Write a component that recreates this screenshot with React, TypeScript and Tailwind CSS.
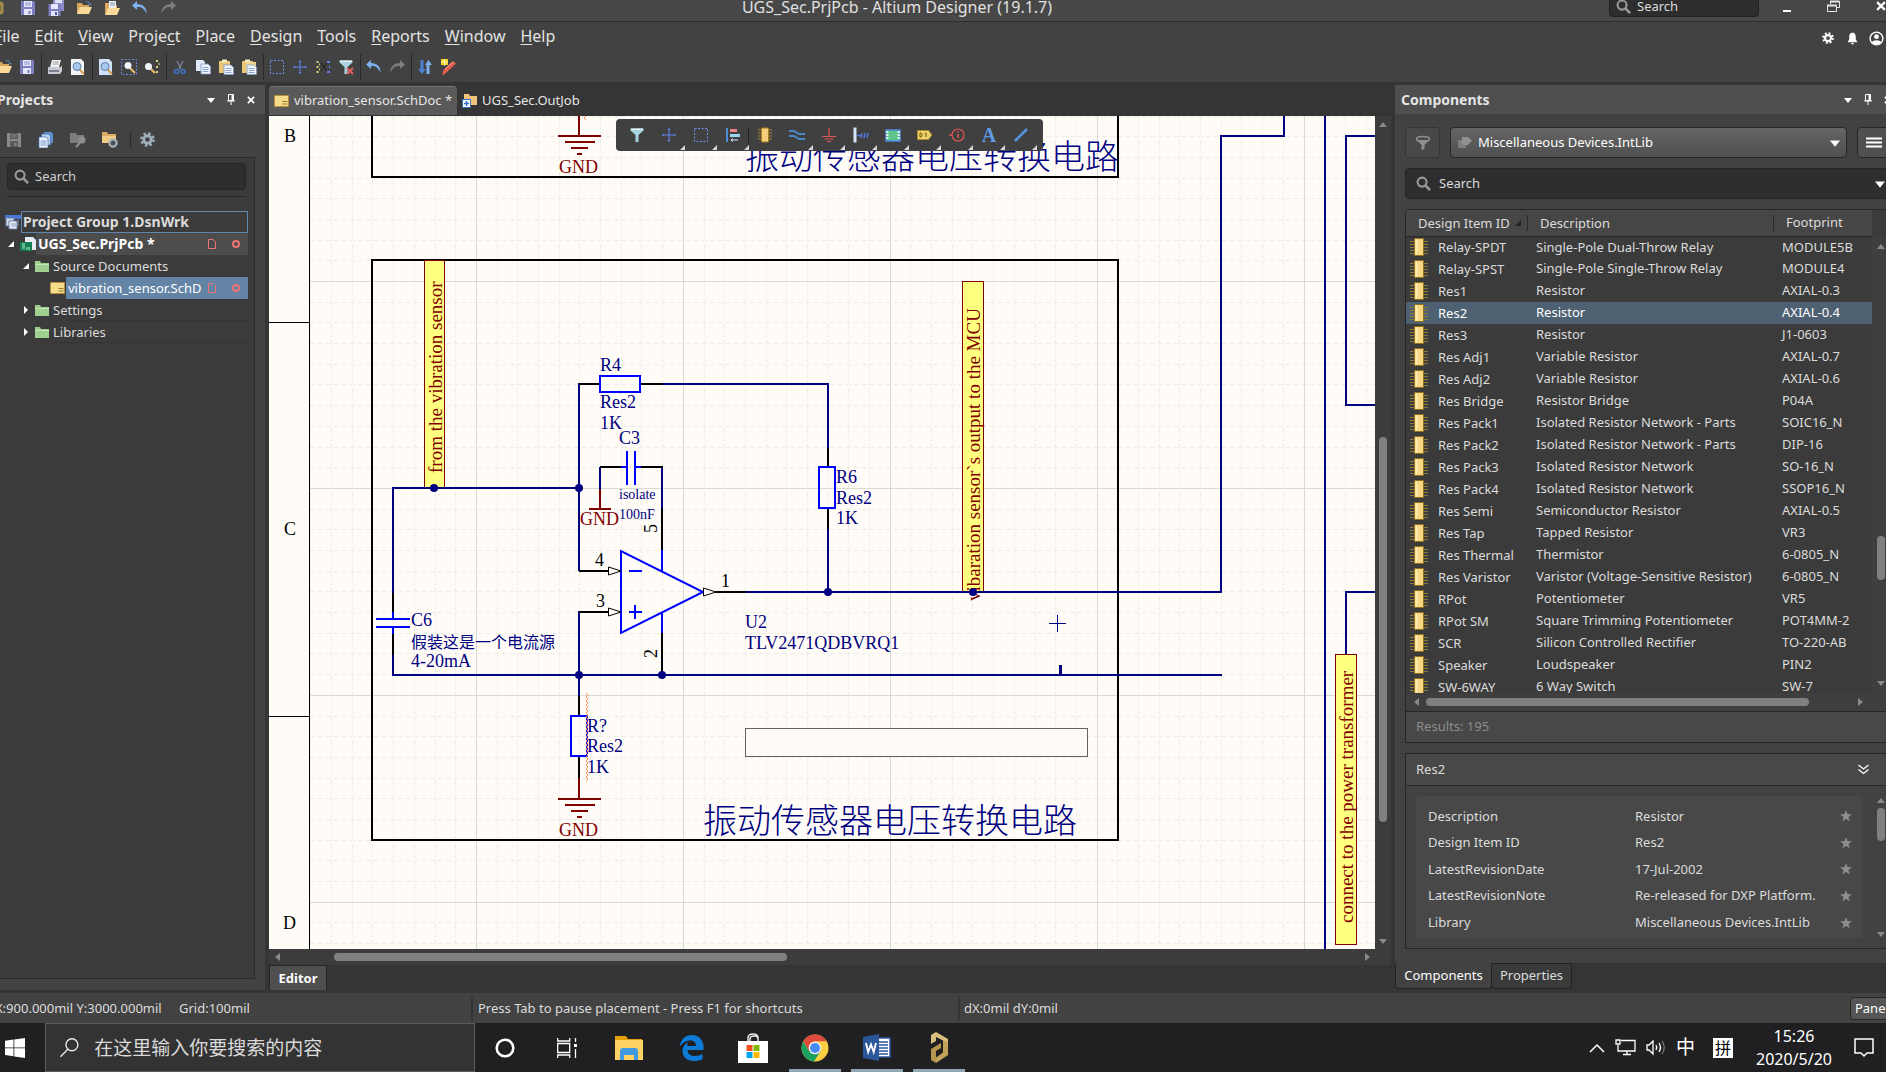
import React, { useState } from "react";

type Kids = { children?: React.ReactNode };

/* ---------- icons ---------- */

function Ic({ s = 16, children }: Kids & { s?: number }) {
  return (
    <svg width={s} height={s} viewBox="0 0 16 16" fill="none" aria-hidden="true" className="shrink-0">
      {children}
    </svg>
  );
}

const Save = ({ c = "#7d7fc0", l = "#e4e6fb" }: { c?: string; l?: string }) => (
  <Ic>
    <path d="M1 1h13l1 1v13H1z" fill={c} />
    <path d="M4 1h8v6H4z" fill={l} />
    <path d="M5 3h6M5 5h6" stroke={c} strokeWidth="0.8" />
    <path d="M4 9h8v6H4z" fill={l} />
    <path d="M8.500 11h2v3h-2z" fill={c} />
  </Ic>
);
const SaveAll = () => (
  <Ic>
    <path d="M5 0h11v11H5z" fill="#8b8cc8" />
    <path d="M7 0h7v3H7z" fill="#dfe2fa" />
    <path d="M0.500 4h12v12h-12z" fill="#7d7fc0" />
    <path d="M3 4h7v5H3zM3 11h7v5H3z" fill="#e4e6fb" />
    <path d="M7 12h2v3H7z" fill="#55579c" />
  </Ic>
);
const Open = () => (
  <Ic>
    <path d="M1 14V3h5l1 2h6v3" fill="#d9a75c" />
    <path d="M1 14 4 7h12l-3 7z" fill="#fbd998" />
    <path d="M10 2c2-1 4 0 4 3M12.500 4l1.500 1.500L15.500 4" stroke="#5b8fc9" strokeWidth="1" />
  </Ic>
);
const OpenDoc = () => (
  <Ic>
    <path d="M1 14V3h5l1 2h6v3" fill="#d9a75c" />
    <path d="M5 1h7v9H5z" fill="#eef3fa" />
    <path d="M6 3h5M6 5h5" stroke="#7d92ad" />
    <path d="M1 15 4 8h12l-3 7z" fill="#fbd998" />
  </Ic>
);
const Undo = () => (
  <Ic>
    <path d="M5 1 0 5.500 5 10V7c4-0.500 7 1 9.500 6.500C15 8 11 4 5 4z" fill="#7db0ee" />
  </Ic>
);
const Redo = () => (
  <Ic>
    <path d="M11 1l5 4.500L11 10V7c-4-0.500-7 1-9.500 6.500C1 8 5 4 11 4z" fill="#7e7e7e" />
  </Ic>
);
const Print = () => (
  <Ic>
    <path d="M5 1h9l-2 7H3z" fill="#f1f1f4" />
    <path d="M6 3h6M5.500 5h6" stroke="#8a8a92" strokeWidth="0.8" />
    <path d="M1 8h13l1-2v6l-2 3H1z" fill="#c6c8d2" />
    <path d="M2 11h10v2H2z" fill="#7c7e8a" />
  </Ic>
);
const Preview = ({ blue = false }: { blue?: boolean }) => (
  <Ic>
    <path d="M1 0h10l3 3v13H1z" fill={blue ? "#cfe0f8" : "#f2f4f8"} />
    <path d="M9.500 10.500 14 15" stroke="#d99a4e" strokeWidth="2" />
    <circle cx="7" cy="7.500" r="4" fill="#a8c9ee" stroke="#5d7da6" />
  </Ic>
);
const ZoomArea = () => (
  <Ic>
    <path d="M0.500 0.500h15v15h-15z" stroke="#6a86e0" strokeDasharray="2 1.500" />
    <path d="M9 9l5 5" stroke="#e7b765" strokeWidth="2.200" />
    <circle cx="7" cy="6.500" r="3.500" fill="#eef4fb" />
  </Ic>
);
const ZoomObj = () => (
  <Ic>
    <path d="M6 9l5 5" stroke="#e7b765" strokeWidth="2.200" />
    <circle cx="4.500" cy="7.500" r="3.500" fill="#eef4fb" />
    <path d="M12 2h2M12 8h2M12 13h2M14.500 5h1" stroke="#d8d67a" strokeWidth="2" />
  </Ic>
);
const Cut = () => (
  <Ic>
    <path d="M5 2l4 8M11 2 7 10" stroke="#7d8998" strokeWidth="1.200" />
    <circle cx="4.500" cy="12.500" r="2" stroke="#3f73c8" strokeWidth="1.500" />
    <circle cx="11" cy="12.500" r="2" stroke="#3f73c8" strokeWidth="1.500" />
  </Ic>
);
const Copy = () => (
  <Ic>
    <path d="M1 1h7l2 2v9H1z" fill="#dfe9f7" />
    <path d="M6 5h7l2.500 2.500V15H6z" fill="#f2f6fc" stroke="#7f9ac2" strokeWidth="0.800" />
    <path d="M7.500 8.500h6M7.500 10.500h6M7.500 12.500h6" stroke="#6d8fc4" strokeWidth="0.800" />
  </Ic>
);
const Paste = ({ multi = false }: { multi?: boolean }) => (
  <Ic>
    <path d="M1 2h11v12H1z" fill="#e8c777" />
    <path d="M4 0.500h5v3H4z" fill="#f6eec3" />
    {multi && <path d="M5 3h10v10H5z" fill="#f0d78f" />}
    <path d="M6 6h7l2.500 2.500V15.500H6z" fill="#f2f6fc" stroke="#7f9ac2" strokeWidth="0.800" />
    <path d="M7.500 9.500h6M7.500 11.500h6M7.500 13.500h6" stroke="#6d8fc4" strokeWidth="0.800" />
  </Ic>
);
const Marquee = () => (
  <Ic>
    <path d="M1.500 1.500h13v13h-13z" stroke="#7291f0" strokeDasharray="2 1.500" />
  </Ic>
);
const Cross = () => (
  <Ic>
    <path d="M8 1.500v13M1.500 8h13" stroke="#6482e6" strokeWidth="1.100" />
    <path d="M8 1l1.500 2h-3zM8 15l1.500-2h-3zM1 8l2-1.500v3zM15 8l-2-1.500v3z" fill="#6482e6" />
  </Ic>
);
const Scatter = () => (
  <Ic>
    <path d="M1.500 3h2M1.500 8h2M1.500 13h2M4 5.500h1M4 10.500h1" stroke="#d8d67a" strokeWidth="2" />
    <path d="M6 4l6 8M12 4l-6 8" stroke="#222" />
    <path d="M12 3h3M12 13h3M14 8h1" stroke="#6482e6" strokeWidth="2" />
  </Ic>
);
const Funnel = ({ x = false }: { x?: boolean }) => (
  <Ic>
    <path d="M1.500 1.500h13v2L9.500 8v7h-3V8L1.500 3.500z" fill="#a9d3e2" />
    <path d="M2 1.500h12v1.500H2z" fill="#e3f2f7" />
    {x && <path d="M9 9l6 6M15 9l-6 6" stroke="#e26060" strokeWidth="2" />}
  </Ic>
);
const UpDown = () => (
  <Ic>
    <path d="M3.500 1h3v9H9l-4 5-4-5h2.500z" fill="#4a7fd4" />
    <path d="M9.500 15h3V6H15l-3.500-5L8 6h1.500z" fill="#7fb0ee" />
  </Ic>
);
const Pen = () => (
  <Ic>
    <path d="M13 2l3 2.500L7 13l-5 4 1.500-6z" fill="#e5604c" />
    <path d="M5 10l8-7" stroke="#f6a08e" />
    <path d="M1 0h7v6H1z" fill="#f5d327" />
    <path d="M4.500 0v7M1 3h7" stroke="#fff9c0" />
  </Ic>
);
const Gear = ({ c = "#9fb0bd", s = 16 }: { c?: string; s?: number }) => (
  <Ic s={s}>
    <circle cx="8" cy="8" r="6.500" stroke={c} strokeWidth="2.600" strokeDasharray="2.600 2.500" />
    <circle cx="8" cy="8" r="4" stroke={c} strokeWidth="3" />
  </Ic>
);
const Docs = () => (
  <Ic>
    <path d="M6 0h7l2 2v9H6z" fill="#5f93d0" />
    <path d="M3.500 2h7l2 2v9h-9z" fill="#b8d4f2" stroke="#3f6ea8" strokeWidth="0.700" />
    <path d="M1 5h7l2 2v9H1z" fill="#eef5fd" stroke="#3f6ea8" strokeWidth="0.700" />
    <path d="M2.500 9h6M2.500 11h6M2.500 13h6" stroke="#5d8bc4" strokeWidth="0.900" />
  </Ic>
);
const FolderFind = () => (
  <Ic>
    <path d="M0 1h6l1 2h7v8H0z" fill="#7d7d7d" />
    <circle cx="12" cy="8" r="3.500" fill="#8f8f8f" />
    <path d="M10 10.500 6 15" stroke="#8f8f8f" strokeWidth="2" />
  </Ic>
);
const FolderGear = () => (
  <Ic>
    <path d="M0 0h5l1 2h8v9H0z" fill="#dcae63" />
    <path d="M0 4h14v7H0z" fill="#f0cc85" />
    <circle cx="11" cy="11" r="3.500" stroke="#a9b4bb" strokeWidth="2" fill="#4a5359" />
    <circle cx="11" cy="11" r="4.500" stroke="#a9b4bb" strokeDasharray="1.500 2" />
  </Ic>
);
const Folder = () => (
  <svg width="14" height="13" viewBox="0 0 14 13" className="shrink-0" aria-hidden="true">
    <path d="M0 1h5l1 2h8v9H0z" fill="#9fd08f" />
    <path d="M0 4h14v1H0z" fill="#c4e6b8" />
  </svg>
);
const SheetIcon = () => (
  <svg width="15" height="12" viewBox="0 0 15 12" className="shrink-0" aria-hidden="true">
    <path d="M0.500 0.500h14v11h-14z" fill="#f4dc8a" stroke="#b58f3c" />
    <path d="M8.500 6.500h5M8.500 9h5" stroke="#9a7a30" />
  </svg>
);
const Chip = () => (
  <svg width="18" height="18" viewBox="0 0 18 18" aria-hidden="true" className="block">
    <path d="M0 3.500h18M0 6.500h18M0 9.500h18M0 12.500h18M0 15.500h18" stroke="#8d7838" />
    <path d="M4.500 0.500h9v17h-9z" fill="#f7d783" stroke="#8d7020" />
    <path d="M5.500 1.500h2v15h-2z" fill="#fdeab5" />
  </svg>
);
const Glass = ({ c = "#9a9a9a", s = 15 }: { c?: string; s?: number }) => (
  <Ic s={s}>
    <circle cx="6.500" cy="6.500" r="4.800" stroke={c} strokeWidth="2.200" />
    <path d="M10 10l5 5" stroke={c} strokeWidth="2.800" />
  </Ic>
);
const Pin = () => (
  <svg width="8" height="11" viewBox="0 0 8 11" aria-hidden="true">
    <path d="M1.500 0.500h5v6h-5zM0 7h8M4 7v4" stroke="#fff" fill="none" />
    <path d="M4.500 1h2v6h-2z" fill="#fff" />
  </svg>
);
type Dir = "up" | "down" | "left" | "right";
function Tri({ dir = "down", c = "#fff", w = 8 }: { dir?: Dir; c?: string; w?: number }) {
  const d = { up: "M0 7 4 2l4 5z", down: "M0 2l4 5 4-5z", left: "M7 0 2 4l5 4z", right: "M2 0l5 4-5 4z" }[dir];
  return (
    <svg width={w} height={w} viewBox="0 0 8 8" aria-hidden="true" className="block shrink-0">
      <path d={d} fill={c} />
    </svg>
  );
}
const CloseX = ({ s = 8 }: { s?: number }) => (
  <svg width={s} height={s} viewBox="0 0 9 9" aria-hidden="true">
    <path d="M1 1l7 7M8 1 1 8" stroke="#fff" strokeWidth="2" />
  </svg>
);

function IB({ label, children }: Kids & { label: string }) {
  return (
    <button type="button" aria-label={label} title={label} className="flex size-4 shrink-0 items-center justify-center">
      {children}
    </button>
  );
}

/* ---------- top ---------- */

function TitleBar() {
  return (
    <header className="relative flex h-[22px] shrink-0 items-start justify-between overflow-hidden border-b border-[#2e2e2e] bg-[#474747]">
      <div className="-ml-3 flex gap-3">
        <IB label="Altium">
          <Ic><path d="M8 1l6 3v8l-6 3" stroke="#a98f4e" strokeWidth="3" /></Ic>
        </IB>
        <div className="ml-1 flex gap-3">
          <IB label="Save"><Save /></IB>
          <IB label="Save all"><SaveAll /></IB>
          <IB label="Open"><Open /></IB>
          <IB label="Open project"><OpenDoc /></IB>
          <IB label="Undo"><Undo /></IB>
          <IB label="Redo"><Redo /></IB>
        </div>
      </div>
      <h1 className="absolute inset-x-0 top-[-3px] pr-[92px] text-center text-[16px] leading-5 text-[#e0e0e0]">
        UGS_Sec.PrjPcb - Altium Designer (19.1.7)
      </h1>
      <div className="relative flex items-start">
        <label className="-mt-2 flex h-[25px] w-[150px] items-center gap-1.5 rounded border border-[#222] bg-[#2d2d2d] px-1.5 pt-1">
          <Glass />
          <input aria-label="Search application" placeholder="Search" className="w-full bg-transparent text-[13px] text-white outline-none placeholder:text-[#dcdcdc]" />
        </label>
        <div className="flex w-[127px] items-center">
          <button type="button" aria-label="Minimize" className="ml-6 flex h-3 w-2.5 items-end">
            <span className="h-0.5 w-2 bg-white" />
          </button>
          <button type="button" aria-label="Restore" className="ml-9">
            <svg width="13" height="12" viewBox="0 0 13 12" fill="none" stroke="#e8e8e8">
              <path d="M3.500 4V1.500h9v6H10" />
              <path d="M3 1.500h9.500M0 5.500h9.500" strokeWidth="2" />
              <path d="M0.500 5.500h9v6h-9z" />
            </svg>
          </button>
          <button type="button" aria-label="Close" className="ml-9"><CloseX s={10} /></button>
        </div>
      </div>
    </header>
  );
}

const menus: [string, string, string][] = [
  ["", "F", "ile"],
  ["", "E", "dit"],
  ["", "V", "iew"],
  ["Proje", "c", "t"],
  ["", "P", "lace"],
  ["", "D", "esign"],
  ["", "T", "ools"],
  ["", "R", "eports"],
  ["", "W", "indow"],
  ["", "H", "elp"],
];

function MenuBar() {
  return (
    <div className="flex h-8 shrink-0 items-center justify-between bg-[#424242] pb-1">
      <nav className="-ml-1.5 flex gap-[15px] text-[16px] leading-6 text-[#e2e2e2]">
        {menus.map(([a, u, b]) => (
          <button type="button" key={a + u + b}>
            {a}
            <span className="underline underline-offset-2">{u}</span>
            {b}
          </button>
        ))}
      </nav>
      <div className="mr-0.5 flex items-center gap-2 pt-1">
        <IB label="Settings"><Gear c="#fff" s={12} /></IB>
        <IB label="Notifications">
          <Ic s={13}><path d="M8 1c3.500 0 4 3 4 5v3l2 3.500H2L4 9V6c0-2 .5-5 4-5zM6.500 13.500h3V15h-3z" fill="#fff" /></Ic>
        </IB>
        <IB label="Account">
          <Ic s={15}>
            <circle cx="8" cy="8" r="6.800" stroke="#fff" strokeWidth="1.500" />
            <circle cx="8" cy="6" r="2.600" fill="#fff" />
            <path d="M3 12c1-3 9-3 10 0-2 3-8 3-10 0z" fill="#fff" />
          </Ic>
        </IB>
      </div>
    </div>
  );
}

function Group({ children, last = false }: Kids & { last?: boolean }) {
  return (
    <div className={last ? "flex h-[26px] items-center gap-[7px] pl-[5px]" : "flex h-[26px] items-center gap-[7px] border-r border-[#2a2a2a] pr-[6px] pl-[5px]"}>
      {children}
    </div>
  );
}

function ToolBar() {
  return (
    <div className="-ml-[9px] flex h-[28px] shrink-0 items-center bg-[#424242] pb-0.5">
      <Group>
        <IB label="Open document"><Open /></IB>
        <IB label="Save document"><Save /></IB>
      </Group>
      <Group>
        <IB label="Print"><Print /></IB>
        <IB label="Print preview"><Preview /></IB>
      </Group>
      <Group>
        <IB label="Fit document"><Preview blue /></IB>
        <IB label="Zoom area"><ZoomArea /></IB>
        <IB label="Zoom selected"><ZoomObj /></IB>
      </Group>
      <Group>
        <IB label="Cut"><Cut /></IB>
        <IB label="Copy"><Copy /></IB>
        <IB label="Paste"><Paste /></IB>
        <IB label="Rubber stamp"><Paste multi /></IB>
      </Group>
      <Group>
        <IB label="Select inside"><Marquee /></IB>
        <IB label="Move"><Cross /></IB>
        <IB label="Deselect"><Scatter /></IB>
        <IB label="Clear filter"><Funnel x /></IB>
      </Group>
      <Group>
        <IB label="Undo edit"><Undo /></IB>
        <IB label="Redo edit"><Redo /></IB>
      </Group>
      <Group last>
        <IB label="Hierarchy"><UpDown /></IB>
        <IB label="Cross probe"><Pen /></IB>
      </Group>
    </div>
  );
}

/* ---------- projects panel ---------- */

const Marks = () => (
  <span className="ml-auto flex shrink-0 items-center gap-4 pr-2">
    <svg width="8" height="10" viewBox="0 0 8 10" fill="none" stroke="#ec7474" aria-hidden="true">
      <path d="M0.500 0.500h4.500l2.500 2.500v6.500h-7z" />
    </svg>
    <svg width="8" height="8" viewBox="0 0 8 8" fill="none" stroke="#ec7474" strokeWidth="2" aria-hidden="true">
      <circle cx="4" cy="4" r="3" />
    </svg>
  </span>
);

const Caret = ({ open }: { open: boolean }) => (
  <svg width="6" height="8" viewBox="0 0 6 8" aria-hidden="true" className="shrink-0">
    <path d={open ? "M6 1v6H0z" : "M1 0l4 4-4 4z"} fill="#fff" />
  </svg>
);

function ProjectsPanel() {
  return (
    <aside className="flex w-[265px] shrink-0 flex-col bg-[#424242] pb-[11px]">
      <div className="flex h-[29px] items-center justify-between bg-[#4f4f4f] pr-1.5">
        <h2 className="-ml-[3px] text-[14px] font-bold text-[#e4e4e4]">Projects</h2>
        <div className="flex items-center gap-1">
          <IB label="Panel menu"><Tri /></IB>
          <IB label="Pin panel"><Pin /></IB>
          <IB label="Close panel"><CloseX /></IB>
        </div>
      </div>
      <div className="flex h-[43px] items-center gap-4 pt-2 pl-1.5">
        <IB label="Save project"><Save c="#8a8a8a" l="#5a5a5a" /></IB>
        <IB label="Compile"><Docs /></IB>
        <IB label="Find in project"><FolderFind /></IB>
        <IB label="Project options"><FolderGear /></IB>
        <span className="-mr-2 -ml-1 h-4 w-px bg-[#2a2a2a]" />
        <IB label="Panel settings"><Gear s={15} /></IB>
      </div>
      <div className="mr-2.5 flex flex-1 flex-col border-y border-r border-[#292929] bg-[#3b3b3b] pt-[5px]">
        <div className="mr-2 ml-[7px] border-b border-[#292929] pb-1.5">
          <label className="flex h-[27px] items-center gap-1.5 rounded border border-[#262626] bg-[#2e2e2e] px-1.5">
            <Glass />
            <input aria-label="Search projects" placeholder="Search" className="w-full bg-transparent text-[13px] text-white outline-none placeholder:text-[#cfcfcf]" />
          </label>
        </div>
        <ul className="mt-3.5 mr-[6px] text-[13px] leading-5 text-[#dcdcdc]">
          <li className="flex h-[22px] items-center pl-[5px]">
            <Ic>
              <path d="M0 1h16v4H0z" fill="#4a76d8" />
              <path d="M1 4h8v8H1z" fill="#cdd8ea" stroke="#6a7fa6" />
              <path d="M4 7h8v8H4z" fill="#f0f4fa" stroke="#6a7fa6" />
              <path d="M6 10h5M6 12h5M13 6v6" stroke="#7f93b8" />
            </Ic>
            <span className="flex h-full flex-1 items-center border border-[#5f86ad] pl-px text-[14px] font-bold">Project Group 1.DsnWrk</span>
          </li>
          <li className="flex h-[22px] items-center pl-2">
            <Caret open />
            <svg width="16" height="15" viewBox="0 0 16 15" className="ml-1.5 shrink-0" aria-hidden="true">
              <path d="M5 0h8l3 3v10H5z" fill="#e8ebf0" />
              <path d="M0 5h12v9H0z" fill="#128052" />
              <path d="M2 7h3M2 9h3M2 11h3M7 10v3M9 10v3" stroke="#b6ecc9" />
            </svg>
            <span className="flex h-full flex-1 items-center bg-[#4c4c4c] pl-0.5 text-[14px] font-bold text-white">
              UGS_Sec.PrjPcb *<Marks />
            </span>
          </li>
          <li className="flex h-[22px] items-center gap-[6px] pl-[23px]">
            <Caret open />
            <Folder />
            <span className="-ml-0.5 flex-1">Source Documents</span>
          </li>
          <li className="flex h-[22px] items-center gap-px pl-[50px]">
            <SheetIcon />
            <span className="flex h-full min-w-0 flex-1 items-center bg-[#6384a5] pl-0.5 whitespace-nowrap text-white">
              vibration_sensor.SchD
              <Marks />
            </span>
          </li>
          {["Settings", "Libraries"].map((t) => (
            <li key={t} className="flex h-[22px] items-center gap-[6px] pl-[23px]">
              <Caret open={false} />
              <Folder />
              <span className="-ml-0.5 flex h-full flex-1 items-center border-b border-[#353535]">{t}</span>
            </li>
          ))}
        </ul>
      </div>
    </aside>
  );
}

/* ---------- schematic ---------- */

const range = (a: number, b: number, step: number) => {
  const out: number[] = [];
  for (let v = a; v < b; v += step) out.push(v);
  return out;
};
const PITCH = 20.69;
const minorX = range(310.9, 1375, PITCH);
const minorY = range(116, 949, PITCH);
const majorX = [476, 683, 890, 1097, 1304];
const majorY = [281, 488, 695, 902];
const dots: [number, number][] = [[434, 488], [579, 488], [828, 592], [973, 592], [579, 675], [662, 675]];
const labels: [number, number, string, string?][] = [
  [600, 371, "R4"], [600, 408, "Res2"], [600, 429, "1K"], [619, 444, "C3"],
  [836, 483, "R6"], [836, 504, "Res2"], [836, 524, "1K"],
  [411, 626, "C6"], [411, 667, "4-20mA"],
  [745, 628, "U2"], [745, 649, "TLV2471QDBVRQ1"],
  [587, 732, "R?"], [587, 752, "Res2"], [587, 773, "1K"],
  [559, 173, "GND", "#800000"], [580, 525, "GND", "#800000"], [559, 836, "GND", "#800000"],
  [595, 566, "4", "#000"], [596, 607, "3", "#000"], [721, 587, "1", "#000"],
  [284, 142, "B", "#000"], [284, 535, "C", "#000"], [283, 929, "D", "#000"],
];
const tags = [
  { x: 425, y: 260, w: 20, h: 228, tx: 442, ty: 473, t: "from the vibration sensor" },
  { x: 963, y: 281, w: 21, h: 311, tx: 980, ty: 601, t: "vibaration sensor`s output to the MCU" },
  { x: 1336, y: 654, w: 21, h: 290, tx: 1353, ty: 923, t: "connect to the power transformer" },
];

function Schematic() {
  return (
    <svg width="1106" height="833" viewBox="269 116 1106 833" className="block font-['Liberation_Serif','Noto_Sans_CJK_SC',serif]" role="img" aria-label="Schematic sheet">
      <rect x="269" y="116" width="1106" height="833" fill="#fffcf8" />
      <g stroke="#ededea" strokeDasharray="5 3" shapeRendering="crispEdges">
        {minorX.map((x) => <path key={x} d={`M${x} 116V949`} />)}
        {minorY.map((y) => <path key={y} d={`M310 ${y}H1375`} />)}
      </g>
      <g stroke="#d9dad6" shapeRendering="crispEdges">
        {majorX.map((x) => <path key={x} d={`M${x}.5 116V949`} />)}
        {majorY.map((y) => <path key={y} d={`M310 ${y}.5H1375`} />)}
      </g>
      <path d="M309.500 116V949M269 322.500H309M269 716.500H309" stroke="#000" />
      <path d="M372 116V177H1118V116M372 260H1118V840H372z" fill="none" stroke="#000" strokeWidth="2" />
      {tags.map((g) => (
        <g key={g.t}>
          <rect x={g.x - 0.5} y={g.y + 0.5} width={g.w} height={g.h} fill="#ffff80" stroke="#800000" />
          <text transform={`translate(${g.tx} ${g.ty}) rotate(-90)`} fontSize="19" fill="#800000">{g.t}</text>
        </g>
      ))}
      <g fill="none" strokeWidth="2">
        <path
          stroke="#000080"
          d="M393 593V487M392 488H579M579 571V383M663 384H829M828 383V448M828 529V592M662 467V508M600 467V489M393 655V675M392 675H1222M579 611V696M746 592H1222M1221 592V136M1220 136H1285M1284 136V116M1325 116V949M1375 136H1345M1346 136V406M1345 405H1375M1375 592H1345M1346 591V654"
        />
        <path
          stroke="#000"
          d="M393 593V613M393 634V655M579 384H599M641 384H663M828 448V467M828 508V529M600 467H621M641 467H663M662 508V550M662 633V675M579 571H608M579 612H608M716 592H746M579 696V715M579 756V778"
        />
        <path
          stroke="#0000ff"
          d="M393 612V619M376 619H410M376 627H410M393 627V634M600 376H640V392H600zM819 467H835V508H819zM621 467H627M627 451V485M635 451V485M635 467H641M662 550V571M662 612V633M621 551V633L703 592zM629 571H642M629 612H642M635 605V619M571 716H587V756H571z"
        />
        <path
          stroke="#800000"
          d="M579 116V136M558 136H601M565 142H595M571 148H588M577 154H582M600 489V509M589 509H611M579 778V799M558 799H601M565 805H595M571 811H588M577 817H582"
        />
      </g>
      <path d="M608.500 567V575L621 571zM608.500 608V616L621 612zM703.500 588V596L716 592z" fill="#fffcf8" stroke="#000" />
      {dots.map(([x, y]) => <circle key={`${x}-${y}`} cx={x} cy={y} r="4" fill="#000080" />)}
      <path d={"M586 693" + "l2 2l-2 2".repeat(22)} fill="none" stroke="#ff9060" />
      <path d="M586 116l-2 2 2 2" fill="none" stroke="#ff9060" />
      <rect x="745.500" y="728.500" width="342" height="28" fill="#fffcf8" stroke="#636363" />
      <path d="M1049 623.500H1066M1057.500 615V632" stroke="#000080" />
      <rect x="1059" y="665" width="3" height="9" fill="#000080" />
      <g fontSize="18">
        {labels.map(([x, y, t, c]) => (
          <text key={`${x}-${y}`} x={x} y={y} fill={c ?? "#000080"}>{t}</text>
        ))}
        <text transform="translate(657 533) rotate(-90)">5</text>
        <text transform="translate(657 658) rotate(-90)">2</text>
      </g>
      <g fill="#000080">
        <text x="619" y="499" fontSize="14">isolate</text>
        <text x="619" y="519" fontSize="14">100nF</text>
        <text x="411" y="648" fontSize="16">假装这是一个电流源</text>
        <text x="745" y="169" fontSize="34" fontWeight="300">振动传感器电压转换电路</text>
        <text x="703" y="833" fontSize="34" fontWeight="300">振动传感器电压转换电路</text>
      </g>
    </svg>
  );
}

const activeTools: { n: string; i: React.ReactNode; drop?: boolean; sep?: boolean }[] = [
  { n: "Filter", i: <Funnel /> },
  { n: "Move object", i: <Cross />, drop: true },
  { n: "Select", i: <Marquee />, drop: true },
  {
    n: "Align", drop: true, sep: true,
    i: <Ic><path d="M2 1v14" stroke="#4f8ad6" strokeWidth="2" /><path d="M5 2h7v3H5z" fill="#ee8585" /><path d="M5 7h10v3H5z" fill="#9fd4ee" /><path d="M6 13h7M8 11.500 6 13l2 1.500" stroke="#cfe3f4" /></Ic>,
  },
  {
    n: "Place part",
    i: <Ic><path d="M1 3h14M1 6h14M1 9h14M1 12h14" stroke="#a98a3c" /><path d="M4.500 1h7v14h-7z" fill="#f5cf7a" stroke="#a67c1c" /></Ic>,
  },
  { n: "Place wire", drop: true, i: <Ic><path d="M0 4h5l5 3h6M0 9h5l5 3h6" stroke="#4b8ac6" strokeWidth="2" /></Ic> },
  { n: "Place ground", drop: true, i: <Ic><path d="M8 1v8M1 9.500h14M3.500 12h9M6 14.500h4" stroke="#e05555" strokeWidth="1.200" /></Ic> },
  { n: "Place harness", drop: true, i: <Ic><path d="M0.500 0.500h3v15h-3z" fill="#d5e6f8" /><path d="M4 8.500h4M8 11l1-5M11 11l1-5M14 11l1-5" stroke="#4f78e0" strokeWidth="1.400" /></Ic> },
  { n: "Place sheet symbol", drop: true, i: <Ic><path d="M1 3h14v11H1z" fill="#5fc58d" stroke="#4d86e0" strokeWidth="1.500" /><path d="M1 5h2.500M1 8h2.500M1 11h2.500M12.500 5H15M12.500 8H15M12.500 11H15" stroke="#fff" strokeWidth="1.400" /></Ic> },
  {
    n: "Place port", drop: true,
    i: <Ic><path d="M0.500 3.500h11L15 8l-3.500 4.500h-11z" fill="#ecd36a" stroke="#a98a2c" /><path d="M3 6v4c3 0 3-4 0-4zM8 6.500l1-0.500v4" stroke="#6b5512" /></Ic>,
  },
  { n: "Place directive", drop: true, i: <Ic><circle cx="9" cy="8" r="6" stroke="#e05555" strokeWidth="1.200" /><path d="M0 8h3M9 7v4M9 4v1.500" stroke="#e05555" strokeWidth="1.500" /></Ic> },
  { n: "Place text", drop: true, i: <span className="font-['Liberation_Serif',serif] text-[20px] leading-4 font-bold text-[#5f9be6]">A</span> },
  { n: "Place line", drop: true, i: <Ic><path d="M2 14 14 2" stroke="#5596e0" strokeWidth="2.500" /></Ic> },
];

function ActiveBar() {
  return (
    <div className="absolute top-[3px] left-[347px] flex h-8 items-center rounded bg-[#404040] pr-1.5 pl-[5px]">
      {activeTools.map((t) => (
        <button key={t.n} type="button" aria-label={t.n} title={t.n} className={t.sep ? "relative flex h-full w-8 items-center justify-center after:absolute after:right-0 after:h-4 after:w-px after:bg-[#222]" : "relative flex h-full w-8 items-center justify-center"}>
          {t.i}
          {t.drop && (
            <svg width="5" height="5" viewBox="0 0 5 5" className="absolute right-0 bottom-px" aria-hidden="true">
              <path d="M5 0v5H0z" fill="#d6d6d6" />
            </svg>
          )}
        </button>
      ))}
    </div>
  );
}

function Workspace() {
  return (
    <main className="flex min-w-0 flex-1 flex-col bg-[#353535]">
      <div className="flex h-[31px] text-[13px] text-[#e6e6e6]">
        <button type="button" className="mt-px flex h-[29px] w-[188px] shrink-0 items-center gap-[5px] rounded-t border-t border-[#777] bg-[#5a5a5a] pl-[5px] whitespace-nowrap">
          <SheetIcon />
          vibration_sensor.SchDoc *
        </button>
        <button type="button" className="mt-px flex h-[29px] items-center gap-1 pl-[5px] whitespace-nowrap">
          <Ic>
            <path d="M2 1h5l1 2h7v9H2z" fill="#f0c47c" />
            <path d="M0.500 6.500h8v8h-8z" fill="#fff" stroke="#2f6fd0" />
            <path d="M4.500 8v5M2 10.500h5" stroke="#2f6fd0" strokeWidth="1.500" />
          </Ic>
          UGS_Sec.OutJob
        </button>
      </div>
      <div className="flex min-h-0 flex-1">
        <div className="relative min-w-0 flex-1 overflow-hidden bg-[#fffcf8]">
          <Schematic />
          <ActiveBar />
        </div>
        <div className="flex w-4 shrink-0 flex-col items-center bg-[#3c3c3c] py-1">
          <Tri dir="up" c="#8a8a8a" />
          <span className="mt-[309px] h-[385px] w-2 rounded-full bg-[#808080]" />
          <span className="mt-auto"><Tri dir="down" c="#8a8a8a" /></span>
        </div>
      </div>
      <div className="flex h-4 shrink-0 items-center bg-[#3c3c3c] pr-5 pl-1">
        <Tri dir="left" c="#8a8a8a" />
        <span className="ml-[53px] h-2 w-[453px] rounded-full bg-[#808080]" />
        <span className="ml-auto"><Tri dir="right" c="#8a8a8a" /></span>
      </div>
      <div className="flex h-[25px] shrink-0">
        <button type="button" className="w-[58px] border border-b-0 border-[#262626] bg-[#4f4f4f] pt-0.5 text-[13px] font-bold text-white">Editor</button>
      </div>
    </main>
  );
}

/* ---------- components panel ---------- */

const parts: [string, string, string][] = [
  ["Relay-SPDT", "Single-Pole Dual-Throw Relay", "MODULE5B"],
  ["Relay-SPST", "Single-Pole Single-Throw Relay", "MODULE4"],
  ["Res1", "Resistor", "AXIAL-0.3"],
  ["Res2", "Resistor", "AXIAL-0.4"],
  ["Res3", "Resistor", "J1-0603"],
  ["Res Adj1", "Variable Resistor", "AXIAL-0.7"],
  ["Res Adj2", "Variable Resistor", "AXIAL-0.6"],
  ["Res Bridge", "Resistor Bridge", "P04A"],
  ["Res Pack1", "Isolated Resistor Network - Parts", "SOIC16_N"],
  ["Res Pack2", "Isolated Resistor Network - Parts", "DIP-16"],
  ["Res Pack3", "Isolated Resistor Network", "SO-16_N"],
  ["Res Pack4", "Isolated Resistor Network", "SSOP16_N"],
  ["Res Semi", "Semiconductor Resistor", "AXIAL-0.5"],
  ["Res Tap", "Tapped Resistor", "VR3"],
  ["Res Thermal", "Thermistor", "6-0805_N"],
  ["Res Varistor", "Varistor (Voltage-Sensitive Resistor)", "6-0805_N"],
  ["RPot", "Potentiometer", "VR5"],
  ["RPot SM", "Square Trimming Potentiometer", "POT4MM-2"],
  ["SCR", "Silicon Controlled Rectifier", "TO-220-AB"],
  ["Speaker", "Loudspeaker", "PIN2"],
  ["SW-6WAY", "6 Way Switch", "SW-7"],
];
const details: [string, string][] = [
  ["Description", "Resistor"],
  ["Design Item ID", "Res2"],
  ["LatestRevisionDate", "17-Jul-2002"],
  ["LatestRevisionNote", "Re-released for DXP Platform."],
  ["Library", "Miscellaneous Devices.IntLib"],
];

function ComponentsPanel() {
  const [sel, setSel] = useState("Res2");
  return (
    <aside className="flex w-[491px] shrink-0 flex-col overflow-hidden bg-[#353535] text-[13px] text-[#dcdcdc]">
      <div className="flex min-h-0 flex-1 flex-col bg-[#424242] pb-[14px]">
        <div className="flex h-[29px] shrink-0 items-center justify-between bg-[#4f4f4f] pl-1.5">
          <h2 className="text-[14px] font-bold text-[#e4e4e4]">Components</h2>
          <div className="-mr-2.5 flex items-center gap-1">
            <IB label="Panel menu"><Tri /></IB>
            <IB label="Pin panel"><Pin /></IB>
            <IB label="Close panel"><CloseX /></IB>
          </div>
        </div>
        <div className="mt-[13px] ml-2.5 flex h-[31px] shrink-0 gap-2.5">
          <button type="button" aria-label="Filter" className="flex w-[35px] shrink-0 items-center justify-center rounded border border-[#343434] bg-[#484848]">
            <Ic>
              <ellipse cx="8" cy="4" rx="6.500" ry="2.500" stroke="#8f8f8f" strokeWidth="1.500" />
              <path d="M1.500 5 6.500 10v5l3-1v-4l5-5" fill="#8f8f8f" />
            </Ic>
          </button>
          <div className="relative flex w-[397px] shrink-0 items-center">
            <select aria-label="Library" className="h-full w-full appearance-none rounded border border-[#262626] bg-linear-to-b from-[#646464] to-[#505050] pt-px pl-[27px] text-white">
              <option>Miscellaneous Devices.IntLib</option>
            </select>
            <svg width="14" height="12" viewBox="0 0 14 12" className="pointer-events-none absolute left-2" aria-hidden="true">
              <path d="M0 3h8v8H0z" fill="#7e7e7e" />
              <path d="M4 0h6l4 3.500L10 8H4z" fill="#909090" />
            </svg>
            <span className="pointer-events-none absolute right-[7px]"><Tri w={10} /></span>
          </div>
          <button type="button" aria-label="Operations" className="flex w-[60px] shrink-0 items-center rounded border border-[#262626] bg-[#505050] pl-2">
            <svg width="16" height="11" viewBox="0 0 16 11" aria-hidden="true"><path d="M0 1.500h16M0 5.500h16M0 9.500h16" stroke="#fff" strokeWidth="2" /></svg>
          </button>
        </div>
        <label className="mt-2.5 -mr-2 ml-2.5 flex h-[31px] shrink-0 items-center gap-2 rounded border border-[#262626] bg-[#2e2e2e] pr-2 pl-2.5">
          <Glass />
          <input aria-label="Search components" placeholder="Search" className="w-full bg-transparent outline-none placeholder:text-[#dcdcdc]" />
          <Tri w={10} />
        </label>
        <div className="mt-2.5 -mr-1 ml-2.5 flex min-h-0 flex-1 flex-col rounded-t border border-r-0 border-[#262626] bg-[#3b3b3b]">
          <div className="flex min-h-0 flex-1">
            <div className="min-w-0 flex-1 overflow-hidden">
              <table className="w-full table-fixed border-collapse text-left whitespace-nowrap">
                <colgroup>
                  <col className="w-[122px]" />
                  <col className="w-[246px]" />
                  <col />
                </colgroup>
                <thead>
                  <tr className="h-[26px] border-b border-[#262626] bg-[#464646]">
                    <th className="pl-3 font-normal">
                      <span className="flex items-center justify-between border-r border-[#2a2a2a] pr-1.5 leading-4">
                        Design Item ID
                        <svg width="6" height="6" viewBox="0 0 6 6" aria-hidden="true"><path d="M6 0v6H0z" fill="#222" /></svg>
                      </span>
                    </th>
                    <th className="pl-3 font-normal">
                      <span className="block border-r border-[#2a2a2a] leading-4">Description</span>
                    </th>
                    <th className="pl-3 font-normal">Footprint</th>
                  </tr>
                </thead>
                <tbody>
                  {parts.map(([id, d, f]) => (
                    <tr key={id} onClick={() => setSel(id)} className={sel === id ? "h-[22px] bg-[#4e6172] text-white" : "h-[22px]"}>
                      <td className="p-0 pl-1">
                        <span className="flex items-center gap-2.5 leading-5"><Chip />{id}</span>
                      </td>
                      <td className="p-0 pl-2">{d}</td>
                      <td className="p-0 pl-2">{f}</td>
                    </tr>
                  ))}
                </tbody>
              </table>
            </div>
            <div className="mt-[26px] flex w-[18px] shrink-0 flex-col items-center bg-[#3f3f3f] pt-1.5 pb-1.5">
              <Tri dir="up" c="#8a8a8a" />
              <span className="mt-[286px] h-11 w-2 rounded-full bg-[#808080]" />
              <span className="mt-auto"><Tri dir="down" c="#8a8a8a" /></span>
            </div>
          </div>
          <div className="flex h-[18px] shrink-0 items-center bg-[#3f3f3f] pr-[26px] pl-1.5">
            <Tri dir="left" c="#8a8a8a" />
            <span className="ml-[6px] h-2 w-[383px] rounded-full bg-[#808080]" />
            <span className="ml-auto"><Tri dir="right" c="#8a8a8a" /></span>
          </div>
        </div>
        <p className="-mr-1 ml-2.5 flex h-[31px] shrink-0 items-center border border-t-0 border-[#262626] bg-[#484848] pl-2.5 text-[#8c8c8c]">Results: 195</p>
        <section className="mt-2.5 -mr-1 ml-2.5 shrink-0 border border-[#262626]">
          <div className="flex h-8 items-center justify-between border-b border-[#262626] bg-[#484848] pr-5 pl-2.5">
            <h3>Res2</h3>
            <button type="button" aria-label="Collapse details">
              <svg width="11" height="11" viewBox="0 0 11 11" fill="none" stroke="#fff" strokeWidth="1.300"><path d="M0.500 1l5 4 5-4M0.500 5.500l5 4 5-4" /></svg>
            </button>
          </div>
          <div className="flex justify-between py-2.5 pl-2.5">
            <dl className="flex h-[142px] w-[447px] flex-col overflow-hidden rounded-t bg-[#484848] pt-[7px] pb-0.5">
              {details.map(([k, v]) => (
                <div key={k} className="flex flex-1 items-center pr-[11px] pl-3">
                  <dt className="w-[207px]">{k}</dt>
                  <dd className="flex flex-1 items-center justify-between whitespace-nowrap">
                    {v}
                    <svg width="12" height="12" viewBox="0 0 12 12" className="shrink-0" aria-hidden="true"><path d="M6 0l1.500 4.200 4.500.1-3.600 2.700L9.700 11.500 6 8.800 2.300 11.500l1.300-4.500L0 4.300l4.500-.1z" fill="#909090" /></svg>
                  </dd>
                </div>
              ))}
            </dl>
            <div className="flex w-4 flex-col items-center">
              <Tri dir="up" c="#8a8a8a" />
              <span className="mt-1 h-[33px] w-2 rounded-full bg-[#808080]" />
              <span className="mt-auto"><Tri dir="down" c="#8a8a8a" /></span>
            </div>
          </div>
        </section>
      </div>
      <div className="flex h-[27px] shrink-0">
        <button type="button" className="h-[26px] w-[97px] rounded-b border-x border-b border-[#222] bg-[#424242] text-white">Components</button>
        <button type="button" className="h-[26px] w-[80px] rounded-b border border-l-0 border-[#222] bg-[#3a3a3a]">Properties</button>
      </div>
    </aside>
  );
}

/* ---------- status + taskbar ---------- */

function StatusBar() {
  return (
    <footer className="flex h-[30px] shrink-0 items-center overflow-hidden bg-[#424242] pt-px text-[13px] text-[#dcdcdc]">
      <div className="flex w-[471px] shrink-0 whitespace-nowrap">
        <span className="-ml-[5px] w-[184px]">X:900.000mil Y:3000.000mil</span>
        <span>Grid:100mil</span>
      </div>
      <div className="flex h-6 w-[487px] shrink-0 items-center border-l-2 border-[#353535] pl-[5px]">Press Tab to pause placement - Press F1 for shortcuts</div>
      <div className="flex h-6 flex-1 items-center border-l-2 border-[#353535] pl-1">dX:0mil dY:0mil</div>
      <button type="button" className="-mr-3.5 h-[23px] w-[50px] shrink-0 rounded border border-[#262626] bg-[#555] text-white">Panels</button>
    </footer>
  );
}

function TaskApp({ label, open = false, children }: Kids & { label: string; open?: boolean }) {
  return (
    <button type="button" aria-label={label} className="relative flex h-full w-[62px] shrink-0 items-center justify-center">
      {children}
      {open && <span className="absolute inset-x-[5px] bottom-0 h-[3px] bg-[#8fa6b3]" />}
    </button>
  );
}

function Taskbar() {
  return (
    <footer className="flex h-[49px] shrink-0 items-center bg-[#202022] text-white">
      <button type="button" aria-label="Start" className="flex w-[45px] shrink-0 pl-[5px]">
        <svg width="20" height="20" viewBox="0 0 20 20" fill="#fff"><path d="M0 2.800 8.500 1.600v7.900H0zM9.300 1.500 20 0v9.500H9.300zM0 10.300h8.500v7.900L0 17zM9.300 10.300H20V20L9.300 18.400z" /></svg>
      </button>
      <label className="flex h-full w-[430px] shrink-0 items-center gap-[15px] border border-[#5c5c5c] bg-[#333] pl-3.5">
        <svg width="21" height="21" viewBox="0 0 21 21" fill="none" stroke="#e8e8e8" strokeWidth="1.500"><circle cx="13" cy="7.500" r="6.500" /><path d="M8.500 12.500 0.500 20.500" /></svg>
        <input aria-label="搜索" placeholder="在这里输入你要搜索的内容" className="w-full bg-transparent pt-0.5 text-[19px] outline-none placeholder:text-[#dadada]" />
      </label>
      <div className="-ml-px flex h-full">
        <TaskApp label="Cortana">
          <svg width="20" height="20" viewBox="0 0 20 20" fill="none" stroke="#fff" strokeWidth="2.600"><circle cx="10" cy="10" r="8.300" /></svg>
        </TaskApp>
        <TaskApp label="Task view">
          <svg width="20" height="20" viewBox="0 0 20 20" fill="none" stroke="#fff" strokeWidth="1.300"><path d="M0.700 5.500h12v9h-12zM0.700 0v3h12V0M0.700 20v-3h12v3M18.500 0v4M18.500 11v9" /><path d="M17 6h3v3h-3z" fill="#fff" stroke="none" /></svg>
        </TaskApp>
        <TaskApp label="File Explorer">
          <svg width="28" height="24" viewBox="0 0 28 24"><path d="M0 0h11l2 3h14v3H0z" fill="#e3a008" /><path d="M0 4h28v20H0z" fill="#ffd265" /><path d="M5 24v-9q0-3 3-3h12q3 0 3 3v9h-4v-5H9v5z" fill="#3f9ae0" /></svg>
        </TaskApp>
        <TaskApp label="Edge">
          <svg width="25" height="26" viewBox="0 0 25 26" fill="#0c7cd8"><path d="M0.500 12C1.500 4.500 6.500 0 13 0c7 0 11.500 5 11.500 12v3H8.500c0 4 3.500 6 7.500 6 3 0 5.500-.8 7.500-2v5c-2.500 1.400-5.500 2-8.500 2C8 26 3.500 22 3.500 16c0-4 2-7 6-9C8.600 8.200 8.300 9.600 8.300 11H17c0-3.500-2-5.500-5.500-5.500C7 5.500 3 8 0.500 12z" /></svg>
        </TaskApp>
        <TaskApp label="Store">
          <svg width="30" height="30" viewBox="0 0 30 30" fill="none"><path d="M10 9V5q0-4 5-4t5 4v4M12 9V6q0-3 4-3t4 3" stroke="#e8e8e8" strokeWidth="1.500" /><path d="M0 8h30v22H0z" fill="#fff" /><path d="M8.500 12h6v6h-6z" fill="#f25022" /><path d="M15.500 12h6v6h-6z" fill="#7fba00" /><path d="M8.500 19h6v6h-6z" fill="#00a4ef" /><path d="M15.500 19h6v6h-6z" fill="#ffb900" /></svg>
        </TaskApp>
        <TaskApp label="Chrome" open>
          <svg width="28" height="28" viewBox="0 0 28 28">
            <circle cx="14" cy="14" r="13.500" fill="#ffcd40" />
            <path d="M2.300 7.300A13.500 13.500 0 0 0 13 27.500L20 16.500 8 17z" fill="#1aa260" />
            <path d="M2.300 7.300 A13.500 13.500 0 0 1 25.700 7.300H14a6.500 6.500 0 0 0-6 5L8 17z" fill="#dd4b3e" />
            <circle cx="14" cy="14" r="6.300" fill="#f4f4f4" />
            <circle cx="14" cy="14" r="5" fill="#4a8af4" />
          </svg>
        </TaskApp>
        <TaskApp label="Word" open>
          <svg width="28" height="27" viewBox="0 0 28 27"><path d="M14 4h13v19H14z" fill="#fff" stroke="#2b579a" strokeWidth="1.500" /><path d="M16 8h9M16 11h9M16 14h9M16 17h9M16 20h9" stroke="#2b579a" strokeWidth="1.300" /><path d="M0 3 16 0v27L0 24z" fill="#2b579a" /><path d="M3 9l2.200 9L8 10.500 10.700 18 13 9" fill="none" stroke="#fff" strokeWidth="1.900" /></svg>
        </TaskApp>
        <TaskApp label="Altium Designer" open>
          <svg width="20" height="31" viewBox="0 0 20 31">
            <path d="M2 3 7 0l12 7v4l-5-2.500L7 5v4l-5 3z" fill="#d9bf7c" />
            <path d="M14 8.500 19 10v13L7 31v-5.500l7-5z" fill="#c2a35c" />
            <path d="M2 17l10-6v5l-5 3v12l-5-3z" fill="#b6964f" />
          </svg>
        </TaskApp>
      </div>
      <div className="ml-auto flex h-full items-center">
        <div className="flex items-center gap-2.5 pr-[18px]">
          <button type="button" aria-label="Show hidden icons">
            <svg width="16" height="10" viewBox="0 0 16 10" fill="none" stroke="#fff" strokeWidth="1.500"><path d="M1 9l7-7 7 7" /></svg>
          </button>
          <button type="button" aria-label="Network">
            <svg width="21" height="17" viewBox="0 0 21 17" fill="none" stroke="#fff" strokeWidth="1.300"><path d="M6 1.500h14v10.500H3V6M12 12v3M8 15.500h8M1 1h4v4H1z" /></svg>
          </button>
          <button type="button" aria-label="Volume">
            <svg width="20" height="17" viewBox="0 0 20 17" fill="none" stroke="#fff" strokeWidth="1.300"><path d="M1 6h2l4-4v13l-4-4H1zM10 6q1.500 2.500 0 5M13 4q3 4.500 0 9" /><path d="M16 2q4.500 6.500 0 13" stroke="#777" /></svg>
          </button>
          <button type="button" className="text-[19px]">中</button>
        </div>
        <button type="button" className="mr-[21px] flex size-5 items-center justify-center bg-white text-[16px] leading-4 text-black">拼</button>
        <time className="w-[80px] text-center text-[16px] leading-[23px]">15:26<br />2020/5/20</time>
        <button type="button" aria-label="Notifications" className="ml-5 mr-3">
          <svg width="20" height="20" viewBox="0 0 20 20" fill="none" stroke="#fff" strokeWidth="1.500"><path d="M1 1h18v14h-6l-3 3-3-3H1z" /></svg>
        </button>
      </div>
    </footer>
  );
}

export default function App() {
  return (
    <div className="flex h-screen flex-col overflow-hidden bg-[#353535] font-['Noto_Sans','Noto_Sans_CJK_SC',sans-serif]">
      <TitleBar />
      <MenuBar />
      <ToolBar />
      <div className="mt-[3px] mb-[3px] flex min-h-0 flex-1 gap-1">
        <ProjectsPanel />
        <Workspace />
        <ComponentsPanel />
      </div>
      <StatusBar />
      <Taskbar />
    </div>
  );
}
